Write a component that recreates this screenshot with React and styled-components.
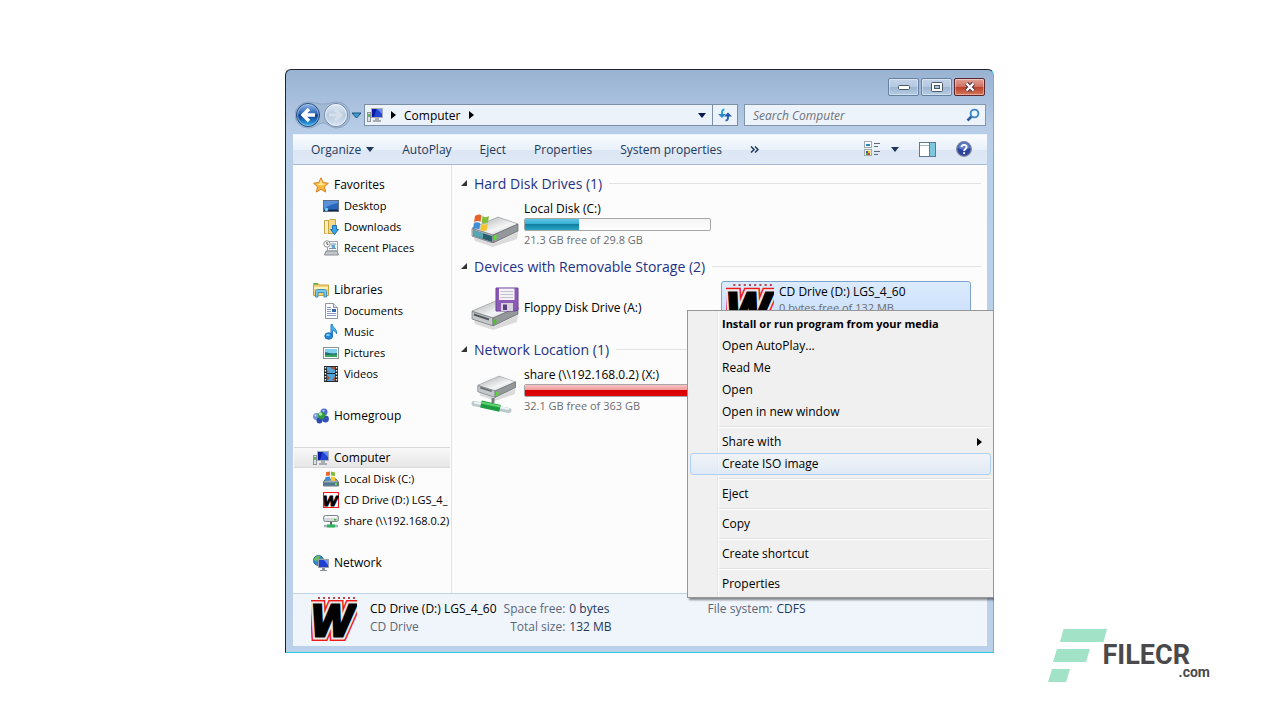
import React from "react";
import styled, { createGlobalStyle } from "styled-components";

const GlobalStyle = createGlobalStyle`
  * {
    box-sizing: border-box;
  }

  body {
    margin: 0;
    background: #fff;
    color: #000;
    font-family: "Open Sans", "Noto Sans", sans-serif;
    font-size: 12px;
  }

  button,
  input {
    font: inherit;
    color: inherit;
  }

  a {
    color: inherit;
    text-decoration: none;
  }

  svg {
    display: block;
    flex-shrink: 0;
  }
`;

const Page = styled.main`
  min-height: 100vh;
  display: grid;
  grid-template-columns: 285fr 709fr 286fr;
  padding: 69px 0 67px;
`;

const Window = styled.section`
  grid-column: 2;
  position: relative;
  display: flex;
  flex-direction: column;
  padding: 0 6px 6px 7px;
  border: 1px solid #1c2430;
  border-right-color: #43c5e4;
  border-bottom-color: #30c8e0;
  border-radius: 6px 6px 0 0;
  background: linear-gradient(#98b2d1, #b9cfe9 64px, #b9d0ea 110px, #bbd1ea);
`;

const TitleBar = styled.header`
  display: flex;
  justify-content: flex-end;
  gap: 2px;
  height: 33px;
  padding: 8px 2px 6px;
`;

const CaptionButton = styled.button`
  display: flex;
  align-items: center;
  justify-content: center;
  width: 31px;
  height: 18px;
  padding: 0;
  border: 1px solid ${({ $close }) => ($close ? "#5b2530" : "#66809f")};
  border-radius: 2px;
  box-shadow: inset 0 0 0 1px rgba(255, 255, 255, 0.4);
  background: ${({ $close }) =>
    $close
      ? "linear-gradient(#dfa297, #cf6f5f 50%, #b93f28 50%, #d4775a)"
      : "linear-gradient(#c3d4e8, #b4c8e0 50%, #9cb5d2 50%, #b6cce4)"};
`;

const NavBar = styled.nav`
  display: flex;
  align-items: center;
  height: 31px;
  padding: 0 1px 7px 2px;
`;

const Travel = styled.div`
  display: flex;
  align-items: center;
  height: 24px;
  width: 69px;
`;

const PlainButton = styled.button`
  display: flex;
  align-items: center;
  padding: 0;
  border: none;
  background: none;
`;

const AddressBar = styled.div`
  flex: 1;
  display: flex;
  align-items: center;
  height: 22px;
  padding-left: 2px;
  border: 1px solid #7b8ea5;
  background: #ecf2fa;
`;

const Crumb = styled(PlainButton)`
  margin: 0 8px;
`;

const AddressEnd = styled.div`
  margin-left: auto;
  display: flex;
  align-items: center;
  align-self: stretch;
`;

const RefreshButton = styled(PlainButton)`
  align-self: stretch;
  justify-content: center;
  width: 25px;
  margin-left: 6px;
  border-left: 1px solid #7b8ea5;
`;

const SearchBox = styled.label`
  flex: 0 1 242px;
  min-width: 0;
  display: flex;
  align-items: center;
  height: 22px;
  margin-left: 6px;
  padding: 0 5px 0 8px;
  border: 1px solid #8496ac;
  background: #edf3fb;
`;

const SearchInput = styled.input`
  flex: 1;
  min-width: 0;
  padding: 0;
  border: none;
  outline: none;
  background: transparent;

  &::placeholder {
    color: #6d7278;
    font-style: italic;
    opacity: 1;
  }
`;

const Toolbar = styled.div`
  display: flex;
  align-items: center;
  gap: 28px;
  height: 31px;
  padding: 0 15px 1px 18px;
  border-top: 1px solid #e9f1fb;
  border-bottom: 1px solid #a6bad2;
  background: linear-gradient(#fafcfe, #e8f0fa 50%, #dce6f4 52%, #dfe9f6);
  color: #1e395b;
`;

const ToolButton = styled(PlainButton)`
  gap: 5px;
  white-space: nowrap;
`;

const ToolEnd = styled.div`
  margin-left: auto;
  display: flex;
  align-items: center;
  gap: 20px;
`;

const Body = styled.div`
  flex: 1;
  display: flex;
  background: #fcfcfc;
`;

const Sidebar = styled.aside`
  flex: 0 0 159px;
  min-width: 0;
  padding: 9px 1px 20px;
  border-right: 1px solid #d8e6f3;
`;

const TreeGroup = styled.div`
  & + & {
    margin-top: 21px;
  }
`;

const TreeItem = styled.a`
  display: flex;
  align-items: center;
  gap: 5px;
  height: 21px;
  padding-left: ${({ $nested }) => ($nested ? "29px" : "19px")};
  font-size: ${({ $nested }) => ($nested ? "11px" : "12px")};
  overflow: hidden;
  white-space: nowrap;
  border: 1px solid ${({ $current }) => ($current ? "#d9d9d9" : "transparent")};
  border-width: 1px 0;
  background: ${({ $current }) =>
    $current ? "linear-gradient(#f8f8f8, #e6e6e6)" : "none"};
`;

const Content = styled.div`
  flex: 1;
  min-width: 0;
  padding: 3px 6px 20px 9px;
`;

const GroupTitle = styled.h2`
  display: flex;
  align-items: center;
  gap: 7px;
  height: 30px;
  margin: 0;
  color: #1e3287;
  font-size: 14px;
  font-weight: 400;
  white-space: nowrap;

  &::after {
    content: "";
    flex: 1;
    height: 1px;
    background: #e2e2e2;
  }
`;

const Tiles = styled.div`
  display: grid;
  grid-template-columns: repeat(auto-fill, 250px);
  gap: 5px;
  padding-left: 5px;
`;

const Tile = styled.a`
  display: flex;
  align-items: center;
  gap: 5px;
  height: 53px;
  padding: 0 4px;
  border: 1px solid ${({ $selected }) => ($selected ? "#7da2ce" : "transparent")};
  border-radius: 3px;
  background: ${({ $selected }) =>
    $selected ? "linear-gradient(#dcebfc, #c1dbfc)" : "none"};
`;

const TileText = styled.div`
  display: flex;
  flex-direction: column;
  flex: 1;
  line-height: 16px;
`;

const Muted = styled.span`
  color: #6d6d6d;
  font-size: 11px;
`;

const Meter = styled.div`
  height: 13px;
  margin: 1px 0;
  border: 1px solid #a6a6a6;
  border-radius: 2px;
  background: linear-gradient(#f4f4f4, #fff);
`;

const MeterFill = styled.div`
  height: 100%;
  background: ${({ $full }) =>
    $full
      ? "linear-gradient(#fbc4c4, #f29a9a 45%, #d80000 50%, #e00808)"
      : "linear-gradient(#5cc6e6, #38aed3 45%, #14809f 50%, #28a8c8)"};
`;

const Details = styled.footer`
  display: flex;
  height: 53px;
  padding: 3px 18px;
  border-top: 1px solid #c3d3e6;
  background: #f0f5fc;
  line-height: 18px;
`;

const DetailName = styled.div`
  display: flex;
  flex-direction: column;
  padding: 3px 7px 0 13px;
  color: #5a6779;
`;

const DetailList = styled.dl`
  display: grid;
  grid-template-columns: auto auto;
  grid-auto-rows: 18px;
  gap: 0 4px;
  margin: 0 96px 0 0;
  padding-top: 3px;
  white-space: nowrap;

  dt {
    color: #5a6779;
    text-align: right;
  }

  dd {
    margin: 0;
    color: #1e395b;
  }
`;

const Strong = styled.span`
  color: #000;
`;

const Menu = styled.div`
  position: absolute;
  top: 240px;
  right: -1px;
  width: 307px;
  padding: 2px;
  border: 1px solid #979797;
  background: linear-gradient(
    90deg,
    #f0f0f0 29px,
    #e2e3e3 29px,
    #e2e3e3 30px,
    #fff 30px,
    #fff 31px,
    #f0f0f0 31px
  );
  box-shadow: 2px 2px 2px rgba(0, 0, 0, 0.45);
  clip-path: inset(0 0 -5px 0);
`;

const MenuItem = styled.button`
  display: flex;
  align-items: center;
  justify-content: space-between;
  width: 100%;
  height: 22px;
  padding: 0 8px 1px 31px;
  border: 1px solid ${({ $hot }) => ($hot ? "#aecff7" : "transparent")};
  border-radius: 3px;
  background: ${({ $hot }) =>
    $hot ? "linear-gradient(rgba(240,245,250,0.7), rgba(220,232,246,0.8))" : "none"};
  font-size: ${({ $bold }) => ($bold ? "11px" : "12px")};
  font-weight: ${({ $bold }) => ($bold ? 700 : 400)};
  white-space: nowrap;
`;

const Separator = styled.hr`
  height: 2px;
  margin: 3px 0 3px 29px;
  border: none;
  border-top: 1px solid #e0e0e0;
  border-bottom: 1px solid #fff;
`;

const Brand = styled.div`
  grid-column: 3;
  align-self: end;
  justify-self: end;
  display: flex;
  margin: 0 70px -29px 0;
  color: #4a4a4c;
  font-family: Roboto, sans-serif;
`;

const BrandText = styled.div`
  display: flex;
  flex-direction: column;
  align-items: flex-end;
  margin-left: -5px;
  padding-top: 14px;
`;

const BrandName = styled.span`
  padding-right: 20px;
  font-size: 27px;
  font-weight: 700;
  line-height: 24px;
`;

const BrandDomain = styled.span`
  font-size: 14px;
  font-weight: 700;
  line-height: 10px;
`;

const Arrow = ({ dir = "down", size = 8, color = "#1e395b" }) => (
  <svg width={dir === "right" ? size / 2 + 1 : size} height={dir === "right" ? size : size / 2 + 1} viewBox={dir === "right" ? "0 0 5 8" : "0 0 8 5"}>
    <path d={dir === "right" ? "M0 0 5 4 0 8Z" : "M0 0H8L4 5Z"} fill={color} />
  </svg>
);

const TravelIcon = () => (
  <svg width="67" height="28" viewBox="0 0 67 28">
    <defs>
      <linearGradient id="back" x2="0" y2="1">
        <stop offset="0" stopColor="#8fb6e6" />
        <stop offset=".45" stopColor="#2b66b8" />
        <stop offset=".5" stopColor="#0a3b90" />
        <stop offset="1" stopColor="#35b2ee" />
      </linearGradient>
      <linearGradient id="fwd" x2="0" y2="1">
        <stop offset="0" stopColor="#e2ebf5" />
        <stop offset=".5" stopColor="#b9cbe0" />
        <stop offset="1" stopColor="#d8e5f3" />
      </linearGradient>
    </defs>
    <path d="M13 1C19 1 21 3 28 3S36 1 42 1A13 13 0 0 1 42 27C35 27 33 22 28 22S20 27 13 27A13 13 0 0 1 13 1Z" fill="#a3bad5" stroke="#8fa7c4" />
    <circle cx="13" cy="14" r="11.5" fill="url(#back)" stroke="#24477c" />
    <circle cx="13" cy="14" r="10.5" fill="none" stroke="#b9d8f4" strokeOpacity=".6" />
    <path d="M14 8 8 14 14 20M9 14H20" fill="none" stroke="#fff" strokeWidth="3.4" />
    <circle cx="41" cy="14" r="11.5" fill="url(#fwd)" stroke="#6e87a6" />
    <circle cx="41" cy="14" r="10.5" fill="none" stroke="#e9f2fb" />
    <path d="M40 9 46 14 40 19M34 14H45" fill="none" stroke="#d5e0ec" strokeWidth="3" />
    <path d="M57 12H66L61.500 17Z" fill="#3f9fce" stroke="#17507f" />
  </svg>
);

const MinIcon = () => (
  <svg width="12" height="6" viewBox="0 0 12 6">
    <rect x=".5" y="1.500" width="11" height="4" rx="1" fill="#fff" stroke="#4a5767" />
  </svg>
);

const MaxIcon = () => (
  <svg width="12" height="10" viewBox="0 0 12 10">
    <rect x=".5" y=".5" width="11" height="9" rx="1" fill="#fff" stroke="#4a5767" />
    <rect x="3.500" y="3.500" width="5" height="3" fill="#a8bfd9" stroke="#4a5767" />
  </svg>
);

const CloseIcon = () => (
  <svg width="12" height="10" viewBox="0 0 12 10">
    <path d="M2.500 1.500 9.500 8.500M9.500 1.500 2.500 8.500" stroke="#58394a" strokeWidth="4.500" />
    <path d="M2.500 1.500 9.500 8.500M9.500 1.500 2.500 8.500" stroke="#fff" strokeWidth="2.300" />
  </svg>
);

const ComputerIcon = () => (
  <svg width="16" height="16" viewBox="0 0 16 16">
    <rect x=".5" y="5.500" width="3" height="9" fill="#dfe3e6" stroke="#8d9499" />
    <path d="M2 7V10" stroke="#39a53a" strokeWidth="1.500" />
    <rect x="4.500" y="1.500" width="11" height="9" fill="#2346d2" stroke="#a9adb5" />
    <path d="M5 2H9.500L7 10H5Z" fill="#0c1aa0" />
    <path d="M10 2H15V7Z" fill="#5f8df2" />
    <path d="M8 11H12V13H14V15H6V13H8Z" fill="#a8acb3" />
  </svg>
);

const RefreshIcon = () => (
  <svg width="14" height="14" viewBox="0 0 14 14">
    <path d="M6.500 1.500C4 1.500 4 3 4 7" fill="none" stroke="#2aa0de" strokeWidth="2" />
    <path d="M0 6H8L4 10Z" fill="#2d86d0" />
    <path d="M7.500 12.500C10 12.500 10 11 10 8" fill="none" stroke="#2a62b8" strokeWidth="2" />
    <path d="M6 8.500H14L10 4.500Z" fill="#2458ae" />
  </svg>
);

const SearchIcon = () => (
  <svg width="14" height="14" viewBox="0 0 14 14">
    <path d="M6 8 1.500 12.500" stroke="#2e5fa5" strokeWidth="2.600" />
    <circle cx="8.500" cy="5.500" r="3.900" fill="#eaf5fd" stroke="#3e86c4" strokeWidth="1.900" />
  </svg>
);

const ViewIcon = () => (
  <svg width="17" height="16" viewBox="0 0 17 16">
    <rect x=".5" y=".5" width="7" height="6" fill="#f9fcff" stroke="#a4aab2" />
    <path d="M2 3H6V5H2Z" fill="#2d8cb5" />
    <rect x=".5" y="8.500" width="7" height="6" fill="#f8f3c0" stroke="#a4aab2" />
    <path d="M2 10H4V12H2Z" fill="#325fbf" />
    <path d="M4 10H6V12H4Z" fill="#e8b81f" />
    <path d="M2 12H4V14H2Z" fill="#4da53c" />
    <path d="M4 12H6V14H4Z" fill="#d8422f" />
    <path d="M10 2.500H16M10 5.500H14M10 10.500H16M10 13.500H14" stroke="#5f6b79" />
  </svg>
);

const PaneIcon = () => (
  <svg width="17" height="15" viewBox="0 0 17 15">
    <rect x=".5" y=".5" width="16" height="14" fill="#fff" stroke="#5c7896" />
    <path d="M1 3.500H10" stroke="#9fb6cc" />
    <rect x="10" y="1" width="6" height="13" fill="#7cc7da" />
    <path d="M10.500 1V14" stroke="#3a8aa8" />
  </svg>
);

const HelpIcon = () => (
  <svg width="16" height="16" viewBox="0 0 16 16">
    <circle cx="8" cy="8" r="7.300" fill="#2c469f" stroke="#7d879c" strokeWidth="1.300" />
    <path d="M2 7A6 6 0 0 1 14 7C10 9 6 9 2 7Z" fill="#5b79c7" />
    <path d="M5.500 6.200C5.500 3 10.600 3.200 10.600 6.100C10.600 8 8.100 7.900 8.100 9.900M8.100 11.200V13" fill="none" stroke="#fff" strokeWidth="1.900" />
  </svg>
);

const StarIcon = () => (
  <svg width="16" height="16" viewBox="0 0 16 16">
    <path d="M8 .8 10.200 5.600 15.400 6.200 11.500 9.700 12.600 15 8 12.300 3.400 15 4.500 9.700 .6 6.200 5.800 5.600Z" fill="#fdb73c" stroke="#d9801c" />
    <path d="M8 2.500 9.400 6.500 13 7 9 8.500 5 8 3 7 6.600 6.500Z" fill="#ffe690" />
  </svg>
);

const DesktopIcon = () => (
  <svg width="16" height="16" viewBox="0 0 16 16">
    <rect x=".5" y="2.500" width="15" height="11" fill="#2a66bd" stroke="#5d6d84" />
    <path d="M1 3H15V5C9 6 4 8 1 11Z" fill="#5990da" />
    <path d="M1 11.500H15V13H1Z" fill="#17294b" />
    <circle cx="3.500" cy="11.500" r="1.700" fill="#73d1f2" />
  </svg>
);

const DownloadsIcon = () => (
  <svg width="16" height="16" viewBox="0 0 16 16">
    <path d="M1.500 1.500H6L7 .5H12.500V14.500H1.500Z" fill="#f3da88" stroke="#c9a440" />
    <path d="M2 2H5V15L2 14Z" fill="#fbeebc" />
    <path d="M5.500 2V14.500" stroke="#c9a440" />
    <path d="M9.500 6.500H13.500V10.500H15.500L11.500 15.500 7.500 10.500H9.500Z" fill="#38a6ea" stroke="#1d6eb8" />
  </svg>
);

const RecentIcon = () => (
  <svg width="16" height="16" viewBox="0 0 16 16">
    <path d="M4.500 1.500H14.500V11H4.500Z" fill="#f6f8fa" stroke="#9aa1a8" />
    <path d="M8 4H13M8 6H11M6 8.500H13" stroke="#7a8fa8" />
    <rect x="9" y="5" width="3" height="3" fill="#5fa7d8" />
    <circle cx="4" cy="4" r="3.200" fill="#fff" stroke="#8d959c" />
    <path d="M4 2V4.300H5.500" fill="none" stroke="#555" />
    <path d="M3 11H14L15.500 15H1.500Z" fill="#c2c7cb" stroke="#888e94" />
  </svg>
);

const LibraryIcon = () => (
  <svg width="16" height="16" viewBox="0 0 16 16">
    <path d="M.5 1.500H5L6 3H15.500V13.500H.5Z" fill="#f0d272" stroke="#c7a33e" />
    <path d="M1 2H5" stroke="#51ad49" strokeWidth="1.500" />
    <path d="M1 5H15V7H1Z" fill="#fbf0c0" />
    <path d="M2.500 15V9.500C2.500 8 4 7.500 5 7.500H11C12.500 7.500 13.500 8.500 13.500 9.500V15H11V10.500H5V15Z" fill="#76c8ec" stroke="#418fbd" />
  </svg>
);

const DocumentIcon = () => (
  <svg width="16" height="16" viewBox="0 0 16 16">
    <path d="M2.500 .5H10.500L14.500 4.500V15.500H2.500Z" fill="#fcfdff" stroke="#8f969e" />
    <path d="M10.500 .5V4.500H14.500" fill="#dce4ec" stroke="#8f969e" />
    <path d="M4 4.500H8M4 6.500H8M4 8.500H8M4 10.500H13M4 12.500H13" stroke="#8aa1bd" />
    <rect x="9" y="6" width="4" height="3" fill="#2f66ae" />
  </svg>
);

const MusicIcon = () => (
  <svg width="16" height="16" viewBox="0 0 16 16">
    <path d="M8 12V.5H9.500C9.500 4 14 4 13.500 10C13 7.500 11.500 6.500 9.500 6.300V12Z" fill="#48b0ec" stroke="#2683c8" />
    <ellipse cx="5.700" cy="12" rx="3.900" ry="3.200" fill="#2387d6" stroke="#1d6fb5" />
    <ellipse cx="5" cy="11" rx="1.800" ry="1" fill="#88d2f8" />
  </svg>
);

const PictureIcon = () => (
  <svg width="16" height="16" viewBox="0 0 16 16">
    <rect x=".5" y="2.500" width="15" height="11" fill="#fff" stroke="#8d9297" />
    <path d="M2 4H14V12H2Z" fill="#7fd0ee" />
    <path d="M2 7C6 8 10 9 14 8V12H2Z" fill="#226f79" />
    <path d="M2 10 14 9.500V12H2Z" fill="#3aa35d" />
  </svg>
);

const VideoIcon = () => (
  <svg width="16" height="16" viewBox="0 0 16 16">
    <rect x="1" y="0" width="14" height="16" fill="#22272c" />
    <path d="M4 1H12V7H4ZM4 8H12V15H4Z" fill="#4fa6df" />
    <path d="M7 1H12V4L9 3ZM4 9 7 12 4 15ZM9 14 12 10V15ZM4 4 6 5 4 7Z" fill="#a1573c" />
    <path d="M2.500 1V16M13.500 1V16" stroke="#f4f4f4" strokeWidth="1.400" strokeDasharray="1.500 1.500" />
  </svg>
);

const HomegroupIcon = () => (
  <svg width="16" height="16" viewBox="0 0 16 16">
    <circle cx="11" cy="4" r="3.500" fill="#4c6fcf" />
    <circle cx="3.500" cy="8.500" r="3.500" fill="#6f92da" />
    <circle cx="12.500" cy="11" r="3.400" fill="#3152b5" />
    <circle cx="6.500" cy="12.500" r="3" fill="#2c4cae" />
    <circle cx="8.500" cy="7.500" r="3.500" fill="#2f9b39" />
    <circle cx="7.500" cy="6" r="1.800" fill="#a6e6a0" />
    <circle cx="10.500" cy="2.700" r="1" fill="#c5d5fa" />
    <circle cx="2.500" cy="7.500" r="1" fill="#dce8ff" />
  </svg>
);

const LocalDiskIcon = () => (
  <svg width="16" height="16" viewBox="0 0 16 16">
    <path d="M2.500 8H13L15.500 11V15H.5V11Z" fill="#9fa8ae" stroke="#687178" />
    <path d="M1 11.500H15V14.500H1Z" fill="#4b7890" />
    <path d="M12 12H14V14H12Z" fill="#60e03d" />
    <path d="M3 1 7 .5V4.500L3 5Z" fill="#ef6b2d" />
    <path d="M8 .5 12 1.500V5L8 4.500Z" fill="#7fbb38" />
    <path d="M2.500 6 7 5.500V9.500L2 10Z" fill="#3b8fd8" />
    <path d="M8 5.500 12 6V10L8 9.500Z" fill="#f8c931" />
  </svg>
);

const ShareIcon = () => (
  <svg width="16" height="16" viewBox="0 0 16 16">
    <rect x=".5" y="2.500" width="15" height="6" rx="2" fill="#d4d8da" stroke="#7e868b" />
    <path d="M2 4H14" stroke="#fff" strokeWidth="1.500" />
    <path d="M11 6H13.500V7.500H11Z" fill="#3ab831" />
    <path d="M8 9V12" stroke="#5c646a" strokeWidth="2" />
    <path d="M1 13H15" stroke="#a7b4bb" strokeWidth="2.500" />
    <path d="M4 13H12" stroke="#2fb35c" strokeWidth="3" />
  </svg>
);

const NetworkIcon = () => (
  <svg width="16" height="16" viewBox="0 0 16 16">
    <circle cx="5.500" cy="5.500" r="5" fill="#3389cf" stroke="#2569a8" />
    <path d="M1 4C3 1 5 .5 7 1L6 4 3 6 1 5ZM7 6 10 3 10 8 7 10Z" fill="#6bc05a" />
    <rect x="5.500" y="4.500" width="10" height="8" fill="#1f3fd0" stroke="#9a9fa8" />
    <path d="M11 5H15V10Z" fill="#6b97f5" />
    <path d="M9 13H12V15H14V16H7V15H9Z" fill="#8c9299" />
  </svg>
);

// disc label mark: italic W with a red and white edge
const WordMark = ({ size = 46 }) => (
  <svg width={size} height={size} viewBox="0 0 46 46">
    {size < 20 && <rect x="1.500" y="1.500" width="43" height="43" fill="#fff" stroke="#f01818" strokeWidth="3" />}
    {size > 20 && <path d="M7 1H45" stroke="#a80f14" strokeWidth="1.500" strokeDasharray="2 3" />}
    <g fontFamily="Liberation Sans" fontWeight="700" fontStyle="italic" fontSize="44" textAnchor="middle" strokeLinejoin="miter">
      {size > 20 && <text x="21" y="39" fill="#f01818" stroke="#f01818" strokeWidth="10">W</text>}
      {size > 20 && <text x="21" y="39" fill="#eee" stroke="#e8e8e8" strokeWidth="7">W</text>}
      <text x="21" y="39" stroke="#000" strokeWidth="3">W</text>
    </g>
  </svg>
);

const DriveBody = () => (
  <>
    <path d="M2 32 22 43 47 31 46 38 22 46 4 40Z" fill="#777" opacity=".25" />
    <path d="M1 27 27 16 47 23V30L22 42 1 35Z" fill="#8a8e91" />
    <path d="M1 27 27 16 47 23 22 34Z" fill="url(#metal)" stroke="#a0a4a7" strokeWidth=".6" />
    <path d="M1 27.500 22 34V42L1 35Z" fill="#c4c8ca" stroke="#74797d" strokeWidth=".7" />
    <path d="M22 34 47 23V30L22 42Z" fill="#94989b" stroke="#64696d" strokeWidth=".7" />
  </>
);

const DriveDefs = () => (
  <defs>
    <linearGradient id="metal" x2="1" y2="1">
      <stop offset="0" stopColor="#a5a8aa" />
      <stop offset=".6" stopColor="#f4f5f5" />
      <stop offset="1" stopColor="#c0c4c6" />
    </linearGradient>
  </defs>
);

const HardDriveArt = () => (
  <svg width="48" height="48" viewBox="0 0 48 48">
    <DriveDefs />
    <DriveBody />
    <path d="M2 29 21 35V41L2 34.500Z" fill="#2b5f70" />
    <path d="M2 29 12 32V37.500L2 34.500Z" fill="#58a6b4" />
    <path d="M22.500 35 25.500 33.700V38L22.500 39.300Z" fill="#52e22c" />
    <path d="M4 15C7 13 9 13 10.500 14.500L9.500 21C7.500 19.500 5 20 3 21.500Z" fill="#e8632a" />
    <path d="M11.500 15C13.500 16.500 15.500 16.500 18 15L17 21.500C14.500 23 12.500 22.500 10.500 21.500Z" fill="#83bd3b" />
    <path d="M2.800 22.500C5 21 7 21 9.300 22.300L8.300 28.500C6 27 4 27.500 2 28.700Z" fill="#3f8ed6" />
    <path d="M10.300 22.700C12.500 24 14.500 24 16.800 22.600L15.800 29C13.500 30.500 11.500 30 9.300 29Z" fill="#f6c42f" />
  </svg>
);

const FloppyArt = () => (
  <svg width="48" height="48" viewBox="0 0 48 48">
    <DriveDefs />
    <DriveBody />
    <path d="M3 30.500 18 35.500" stroke="#55595c" strokeWidth="2" />
    <path d="M22.500 36 25.500 34.700V39L22.500 40.300Z" fill="#52c22c" />
    <path d="M25 4H47V26L44 27H25Z" fill="#8c5bb5" stroke="#68409a" />
    <path d="M28 4.500H43.500V16H28Z" fill="#f2f2f6" />
    <path d="M29.500 7.500H42M29.500 10.500H42M29.500 13.500H42" stroke="#c3c1cc" />
    <path d="M30 19H42V27H30Z" fill="#d6d3dc" />
    <path d="M32 20.500H36V26H32Z" fill="#5c3f80" />
  </svg>
);

const NetDriveArt = () => (
  <svg width="48" height="48" viewBox="0 0 48 48">
    <DriveDefs />
    <g transform="translate(6 -4) scale(.82)">
      <DriveBody />
      <path d="M4 30 18 34.500" stroke="#686c6f" strokeWidth="2" />
      <path d="M23 36 26 34.700V39L23 40.300Z" fill="#52e22c" />
    </g>
    <path d="M22 31V36" stroke="#777c7f" strokeWidth="3" />
    <path d="M3 36.500 38 43.500" stroke="#b9c8c9" strokeWidth="5" strokeLinecap="round" />
    <path d="M3 35.500 38 42" stroke="#edf6f6" strokeWidth="2" />
    <path d="M10 37 29 41.300" stroke="#1c9b40" strokeWidth="7" />
    <path d="M10 35.500 29 39.500" stroke="#63d66f" strokeWidth="2" />
  </svg>
);

const BrandMark = () => (
  <svg width="60" height="53" viewBox="0 0 60 53">
    <path d="M15.500 0H59L55.500 13H12Z" fill="#a2e3c7" />
    <path d="M9 20H42L38 33H5Z" fill="#a2e3c7" />
    <path d="M4 40H22L18 53H0Z" fill="#a2e3c7" />
  </svg>
);

const Expander = () => (
  <svg width="6" height="6" viewBox="0 0 6 6">
    <path d="M6 0V6H0Z" fill="#333" />
  </svg>
);

const tree = [
  [
    { label: "Favorites", icon: StarIcon },
    { label: "Desktop", icon: DesktopIcon },
    { label: "Downloads", icon: DownloadsIcon },
    { label: "Recent Places", icon: RecentIcon },
  ],
  [
    { label: "Libraries", icon: LibraryIcon },
    { label: "Documents", icon: DocumentIcon },
    { label: "Music", icon: MusicIcon },
    { label: "Pictures", icon: PictureIcon },
    { label: "Videos", icon: VideoIcon },
  ],
  [{ label: "Homegroup", icon: HomegroupIcon }],
  [
    { label: "Computer", icon: ComputerIcon, current: true },
    { label: "Local Disk (C:)", icon: LocalDiskIcon },
    { label: "CD Drive (D:) LGS_4_", icon: () => <WordMark size={16} /> },
    { label: "share (\\\\192.168.0.2)", icon: ShareIcon },
  ],
  [{ label: "Network", icon: NetworkIcon }],
];

const groups = [
  {
    title: "Hard Disk Drives (1)",
    drives: [{ name: "Local Disk (C:)", art: HardDriveArt, used: 29, space: "21.3 GB free of 29.8 GB" }],
  },
  {
    title: "Devices with Removable Storage (2)",
    drives: [
      { name: "Floppy Disk Drive (A:)", art: FloppyArt },
      { name: "CD Drive (D:) LGS_4_60", art: () => <WordMark size={48} />, space: "0 bytes free of 132 MB", selected: true },
    ],
  },
  {
    title: "Network Location (1)",
    drives: [{ name: "share (\\\\192.168.0.2) (X:)", art: NetDriveArt, used: 91, space: "32.1 GB free of 363 GB" }],
  },
];

const menu = [
  { label: "Install or run program from your media", bold: true },
  { label: "Open AutoPlay..." },
  { label: "Read Me" },
  { label: "Open" },
  { label: "Open in new window" },
  null,
  { label: "Share with", sub: true },
  { label: "Create ISO image", hot: true },
  null,
  { label: "Eject" },
  null,
  { label: "Copy" },
  null,
  { label: "Create shortcut" },
  null,
  { label: "Properties" },
];

const Drive = ({ name, art: Art, used, space, selected }) => (
  <Tile href="#" $selected={selected}>
    <Art />
    <TileText>
      <span>{name}</span>
      {used && (
        <Meter>
          <MeterFill $full={used > 90} style={{ width: `${used}%` }} />
        </Meter>
      )}
      {space && <Muted>{space}</Muted>}
      {selected && <br />}
    </TileText>
  </Tile>
);

const App = () => {
  return (
    <Page>
      <GlobalStyle />
      <Window>
        <TitleBar>
          <CaptionButton aria-label="Minimize">
            <MinIcon />
          </CaptionButton>
          <CaptionButton aria-label="Maximize">
            <MaxIcon />
          </CaptionButton>
          <CaptionButton $close aria-label="Close">
            <CloseIcon />
          </CaptionButton>
        </TitleBar>
        <NavBar>
          <Travel>
            <PlainButton aria-label="Back and forward">
              <TravelIcon />
            </PlainButton>
          </Travel>
          <AddressBar>
            <ComputerIcon />
            <Crumb aria-label="Root">
              <Arrow dir="right" color="#000" />
            </Crumb>
            <PlainButton>Computer</PlainButton>
            <Crumb aria-label="Drives">
              <Arrow dir="right" color="#000" />
            </Crumb>
            <AddressEnd>
              <PlainButton aria-label="Previous locations">
                <Arrow color="#0b1550" />
              </PlainButton>
              <RefreshButton aria-label="Refresh">
                <RefreshIcon />
              </RefreshButton>
            </AddressEnd>
          </AddressBar>
          <SearchBox>
            <SearchInput type="text" placeholder="Search Computer" aria-label="Search Computer" />
            <SearchIcon />
          </SearchBox>
        </NavBar>
        <Toolbar>
          <ToolButton>
            Organize
            <Arrow />
          </ToolButton>
          <ToolButton>AutoPlay</ToolButton>
          <ToolButton>Eject</ToolButton>
          <ToolButton>Properties</ToolButton>
          <ToolButton>System properties</ToolButton>
          <ToolButton aria-label="More commands">
            <svg width="9" height="7" viewBox="0 0 9 7">
              <path d="M1 .5 4 3.500 1 6.500M5 .5 8 3.500 5 6.500" fill="none" stroke="#1e395b" strokeWidth="1.500" />
            </svg>
          </ToolButton>
          <ToolEnd>
            <ToolButton aria-label="Change view">
              <ViewIcon />
              <span />
              <Arrow />
            </ToolButton>
            <ToolButton aria-label="Preview pane">
              <PaneIcon />
            </ToolButton>
            <ToolButton aria-label="Help">
              <HelpIcon />
            </ToolButton>
          </ToolEnd>
        </Toolbar>
        <Body>
          <Sidebar>
            {tree.map((items) => (
              <TreeGroup key={items[0].label}>
                {items.map(({ label, icon: Icon, current }, i) => (
                  <TreeItem key={label} href="#" $nested={i > 0} $current={current}>
                    <Icon />
                    {label}
                  </TreeItem>
                ))}
              </TreeGroup>
            ))}
          </Sidebar>
          <Content>
            {groups.map(({ title, drives }) => (
              <section key={title}>
                <GroupTitle>
                  <Expander />
                  {title}
                </GroupTitle>
                <Tiles>
                  {drives.map((drive) => (
                    <Drive key={drive.name} {...drive} />
                  ))}
                </Tiles>
              </section>
            ))}
          </Content>
        </Body>
        <Details>
          <WordMark />
          <DetailName>
            <Strong>CD Drive (D:) LGS_4_60</Strong>
            <span>CD Drive</span>
          </DetailName>
          <DetailList>
            <dt>Space free:</dt>
            <dd>0 bytes</dd>
            <dt>Total size:</dt>
            <dd>132 MB</dd>
          </DetailList>
          <DetailList>
            <dt>File system:</dt>
            <dd>CDFS</dd>
          </DetailList>
        </Details>
        <Menu role="menu">
          {menu.map((item, i) =>
            item ? (
              <MenuItem key={item.label} role="menuitem" $bold={item.bold} $hot={item.hot}>
                {item.label}
                {item.sub && <Arrow dir="right" color="#000" />}
              </MenuItem>
            ) : (
              <Separator key={i} />
            )
          )}
        </Menu>
      </Window>
      <Brand>
        <BrandMark />
        <BrandText>
          <BrandName>FILECR</BrandName>
          <BrandDomain>.com</BrandDomain>
        </BrandText>
      </Brand>
    </Page>
  );
};

export default App;
